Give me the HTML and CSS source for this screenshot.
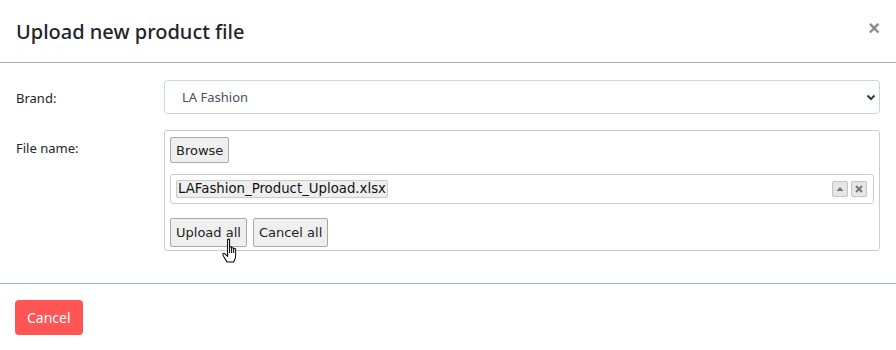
FILE: index.html
```html
<!DOCTYPE html>
<html>
<head>
    <title>Upload new product file</title>
    <link rel="stylesheet" href="styles.css">
</head>
<body>
    <div class="modal">
        <div class="modal-header">
            <h5 class="modal-title">Upload new product file</h5>
            <button class="close" type="button">&times;</button>
        </div>

        <div class="modal-body">
            <div class="form-row">
                <label class="form-label">Brand:</label>
                <div class="select-wrap">
                    <select class="form-select">
                        <option>LA Fashion</option>
                    </select>
                    <svg class="chevron" width="10" height="8" viewBox="0 0 10 8">
                        <path d="M1.5 2.5 L5 6 L8.5 2.5" fill="none" stroke="#343a40" stroke-width="2"/>
                    </svg>
                </div>
            </div>

            <div class="form-row">
                <label class="form-label">File name:</label>
                <div class="uploader">
                    <div><button class="btn-plain" type="button">Browse</button></div>
                    <div class="file-list">
                        <span class="file-tag">LAFashion_Product_Upload.xlsx</span>
                        <div class="file-actions">
                            <span class="mini-btn">
                                <svg width="8" height="6" viewBox="0 0 8 6"><path d="M0.5 5 L4 1 L7.5 5 Z" fill="#777"/></svg>
                            </span>
                            <span class="mini-btn">
                                <svg width="8" height="8" viewBox="0 0 8 8"><path d="M1 1 L7 7 M7 1 L1 7" stroke="#777" stroke-width="2"/></svg>
                            </span>
                        </div>
                    </div>
                    <div class="upload-actions">
                        <button class="btn-plain btn-tall" type="button">Upload all</button>
                        <button class="btn-plain btn-tall" type="button">Cancel all</button>
                        <!-- mouse pointer from the screenshot -->
                        <svg class="pointer" width="19" height="28" viewBox="0 0 17 25">
                            <path d="M5 1.5 C5 0.8 6.8 0.8 6.8 1.5 L6.8 10 L6.8 8.5 C6.8 7.6 8.6 7.6 8.6 8.5 L8.6 10.5 L8.6 9.3 C8.6 8.4 10.4 8.4 10.4 9.3 L10.4 11 L10.4 10 C10.4 9.1 12.2 9.1 12.2 10 L12.2 16 C12.2 18.5 11 20 10.5 21.5 L4.5 21.5 C3.5 19.5 1.5 17 0.8 15 C0.4 13.8 1.6 13.2 2.5 14 L5 16.5 Z" fill="#fff" stroke="#000" stroke-width="0.9" stroke-linejoin="round"/>
                            <path d="M6.8 10 L6.8 13.5 M8.6 10.5 L8.6 13.5 M10.4 11 L10.4 13.5" stroke="#000" stroke-width="0.9"/>
                        </svg>
                    </div>
                </div>
            </div>
        </div>

        <div class="modal-footer">
            <button class="btn-danger" type="button">Cancel</button>
        </div>
    </div>
</body>
</html>
```

FILE: styles.css
```css
body {
    margin: 0;
    background: #fff;
    font-family: "Noto Sans", "Open Sans", Arial, sans-serif;
    color: #212529;
}
.modal {
    width: 896px;
}
.modal-header {
    display: flex;
    align-items: center;
    justify-content: space-between;
    height: 63px;
    padding: 0 16px;
    box-sizing: border-box;
    border-bottom: 1px solid #9fb3be;
}
.modal-title {
    margin: 0;
    font-size: 20px;
    font-weight: 500;
    line-height: 30px;
    padding-top: 2px;
}
.close {
    border: 0;
    background: none;
    padding: 0;
    margin-top: -6px;
    margin-right: 0;
    font-family: Arial, sans-serif;
    font-size: 20px;
    font-weight: bold;
    color: #888;
    line-height: 1;
}
.modal-body {
    padding: 17px 16px 16px;
}
.form-row {
    display: grid;
    grid-template-columns: 148px 1fr;
    margin-bottom: 16px;
}
.form-label {
    font-size: 13px;
    padding-top: 9px;
    line-height: 18px;
}
.select-wrap {
    position: relative;
}
.form-select {
    appearance: none;
    -webkit-appearance: none;
    display: block;
    width: 100%;
    height: 34px;
    padding: 0 17px;
    font-family: inherit;
    font-size: 13px;
    color: #495057;
    background: #fff;
    border: 1px solid #ced4da;
    border-radius: 4px;
}
.chevron {
    position: absolute;
    right: 4px;
    top: 13px;
}
.uploader {
    display: flex;
    flex-direction: column;
    padding: 6px 5px 3px;
    border: 1px solid #ccc;
    border-radius: 3px;
    font-family: "DejaVu Sans", Verdana, sans-serif;
}
.btn-plain {
    font-family: "DejaVu Sans", Verdana, sans-serif;
    font-size: 13px;
    color: #222;
    background: #efefef;
    border: 1px solid #a9a9a9;
    border-radius: 2px;
    height: 26px;
    padding: 0 5px;
}
.btn-tall {
    height: 29px;
}
.file-list {
    display: flex;
    align-items: center;
    justify-content: space-between;
    height: 30px;
    margin-top: 11px;
    padding: 0 6px 0 5px;
    box-sizing: border-box;
    border: 1px solid #ccc;
    border-radius: 3px;
}
.file-tag {
    font-size: 13.3px;
    line-height: 16px;
    padding: 0 1px;
    background: #eee;
    border: 1px solid #ccc;
    border-radius: 2px;
    color: #111;
}
.file-actions {
    display: flex;
    gap: 3px;
}
.mini-btn {
    display: flex;
    align-items: center;
    justify-content: center;
    width: 14px;
    height: 14px;
    background: #e6e6e6;
    border: 1px solid #c4c4c4;
    border-radius: 2px;
}
.upload-actions {
    position: relative;
    display: flex;
    gap: 6px;
    margin-top: 14px;
}
.pointer {
    position: absolute;
    left: 52px;
    top: 20px;
}
.modal-footer {
    border-top: 1px solid #a9b2b9;
    padding: 16px 15px;
}
.btn-danger {
    font-family: inherit;
    font-size: 14px;
    color: #fff;
    background: #ff5555;
    border: 0;
    border-radius: 4px;
    height: 35px;
    padding: 0 12px;
}
```
